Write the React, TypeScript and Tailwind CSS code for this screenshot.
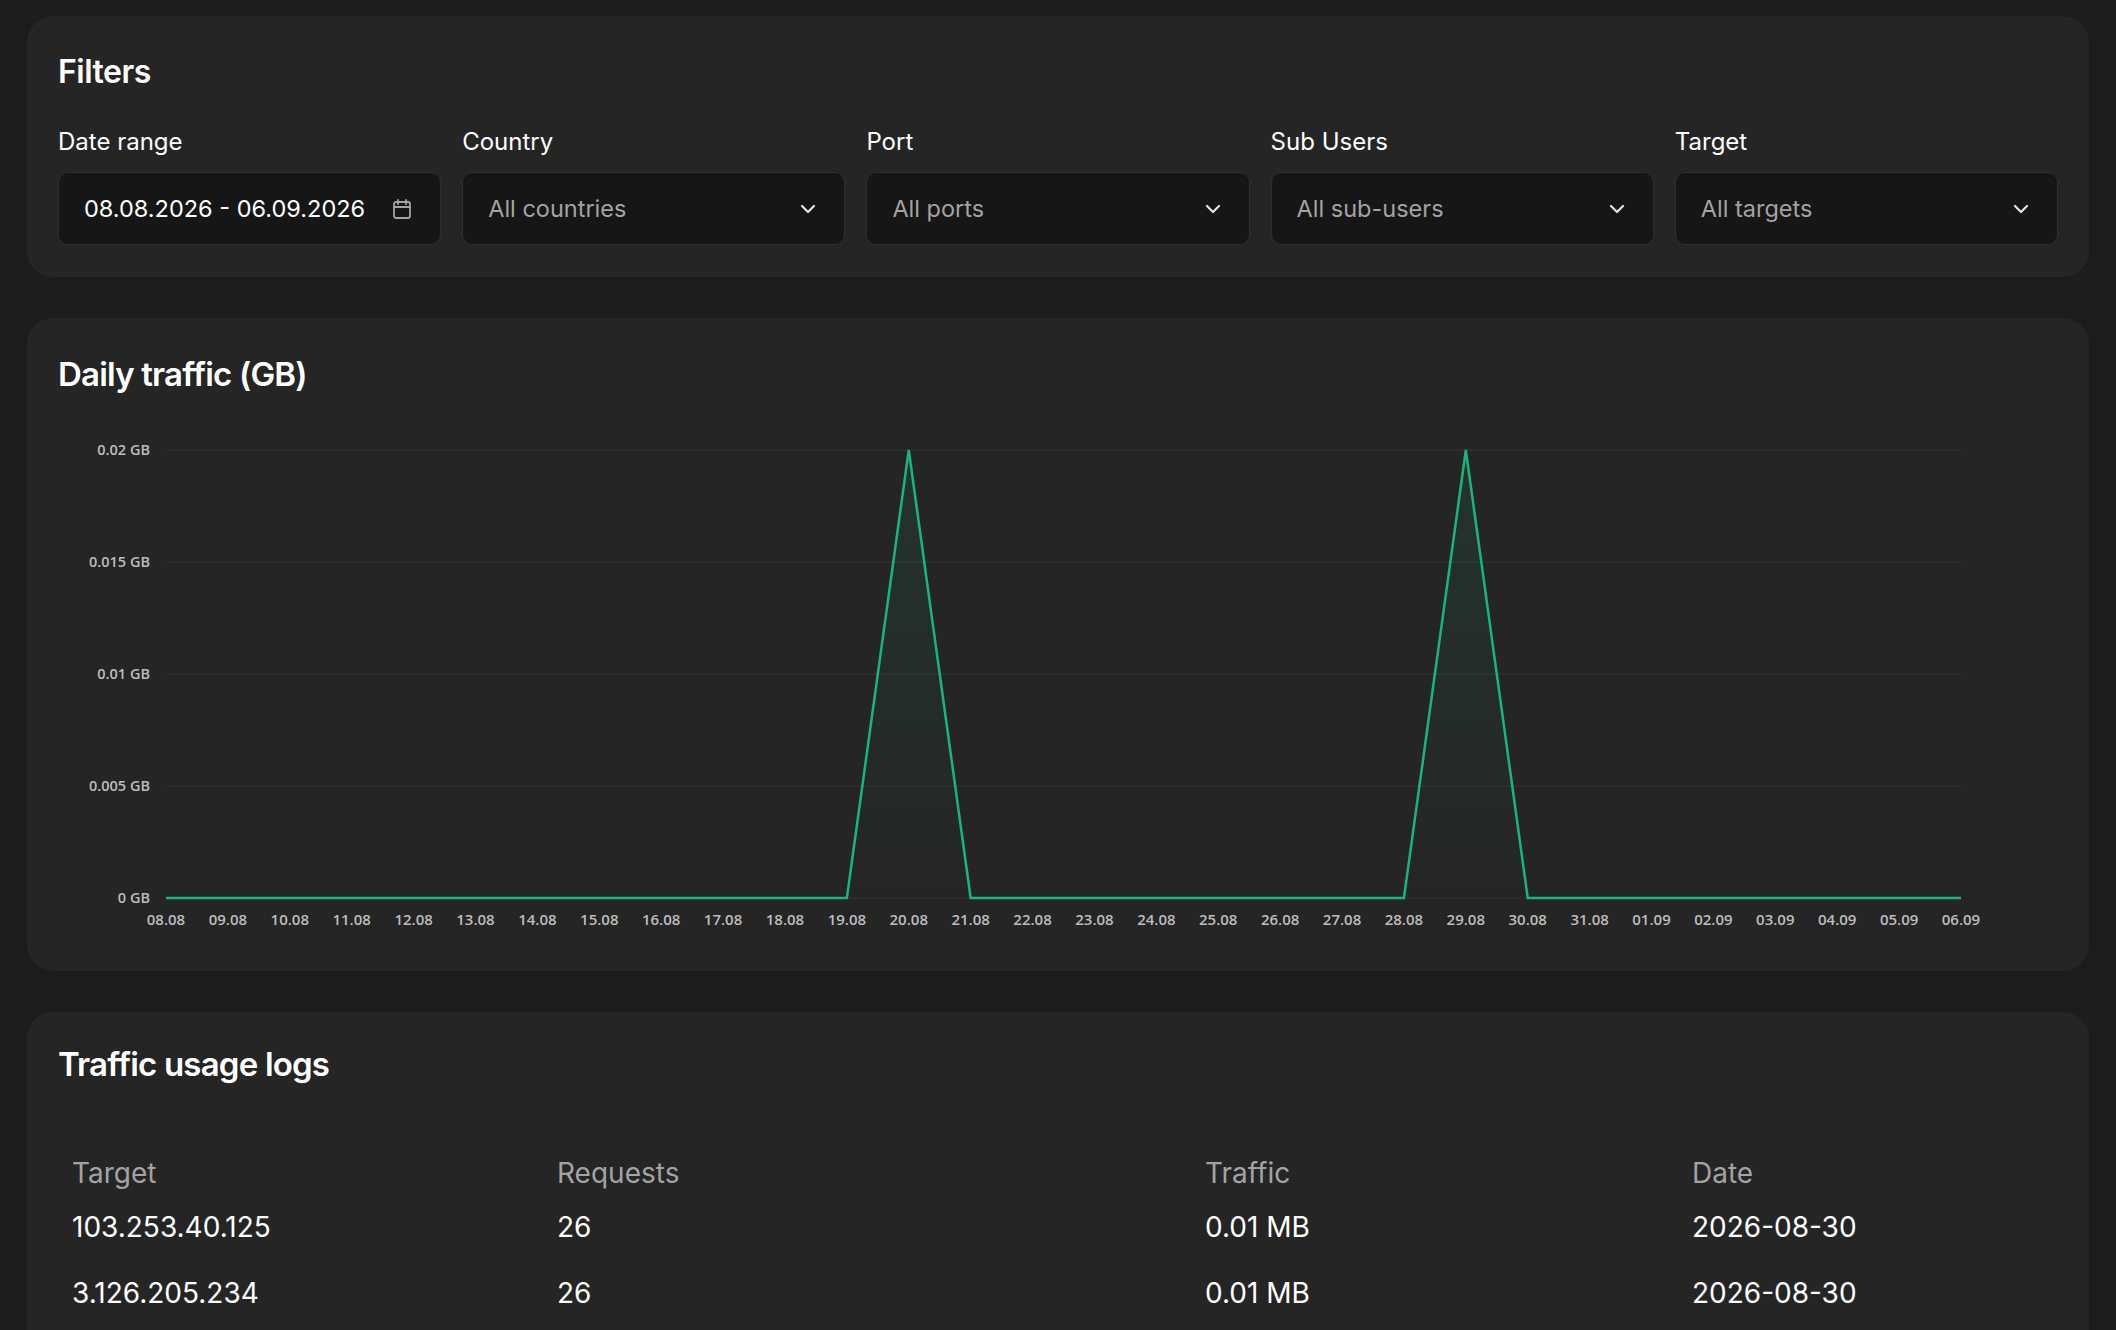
import React from "react";

const days = ["08.08","09.08","10.08","11.08","12.08","13.08","14.08","15.08","16.08","17.08","18.08","19.08","20.08","21.08","22.08","23.08","24.08","25.08","26.08","27.08","28.08","29.08","30.08","31.08","01.09","02.09","03.09","04.09","05.09","06.09"];
const vals = days.map((_, i) => (i === 12 || i === 21 ? 0.02 : 0));

function Chevron() {
  return (
    <svg width="24" height="24" viewBox="0 0 24 24" fill="none" stroke="#e5e5e5" strokeWidth="2.2" strokeLinecap="round" strokeLinejoin="round"><path d="M6 9l6 6 6-6" /></svg>
  );
}

function Select({ label, value }: { label: string; value: string }) {
  return (
    <div className="flex flex-col gap-[14px]">
      <div className="text-[24px] leading-[32px] text-white">{label}</div>
      <div className="h-[73px] rounded-[10px] bg-[#161616] border border-[#2f2f2f] flex items-center justify-between pl-[25px] pr-[24px]">
        <span className="text-[23.5px] text-[#a3a3a3]">{value}</span>
        <Chevron />
      </div>
    </div>
  );
}

function Chart() {
  const x0 = 108, x1 = 1903, y0 = 18, yz = 466;
  const sx = (i: number) => x0 + ((x1 - x0) * i) / 29;
  const sy = (v: number) => yz - ((yz - y0) * v) / 0.02;
  const pts = vals.map((v, i) => `${sx(i)},${sy(v)}`).join(" ");
  const ticks = [0.02, 0.015, 0.01, 0.005, 0];
  return (
    <svg width="2003" height="505" viewBox="0 0 2003 505" style={{ fontFamily: "'Open Sans', sans-serif" }}>
      <defs>
        <linearGradient id="g" x1="0" y1="0" x2="0" y2="1">
          <stop offset="0" stopColor="#16b77a" stopOpacity="0.1" />
          <stop offset="1" stopColor="#16b77a" stopOpacity="0" />
        </linearGradient>
      </defs>
      {ticks.map((t) => (
        <g key={t}>
          <line x1={x0} x2={x1} y1={sy(t)} y2={sy(t)} stroke="#2f2f2f" strokeWidth="1.5" />
          <text x={92} y={sy(t) + 5} textAnchor="end" fill="#bdbdbd" fontSize="14.5" fontWeight="600">{t === 0 ? "0" : t} GB</text>
        </g>
      ))}
      <polygon points={`${x0},${yz} ${pts} ${x1},${yz}`} fill="url(#g)" />
      <polyline points={pts} fill="none" stroke="#16b77a" strokeWidth="2.5" strokeLinejoin="miter" />
      {days.map((d, i) => (
        <text key={d} x={sx(i)} y={493} textAnchor="middle" fill="#bdbdbd" fontSize="15" fontWeight="600">{d}</text>
      ))}
    </svg>
  );
}

export default function App() {
  const rows = [
    ["103.253.40.125", "26", "0.01 MB", "2026-08-30"],
    ["3.126.205.234", "26", "0.01 MB", "2026-08-30"],
  ];
  return (
    <div className="min-h-screen bg-[#1c1c1c] px-[27px] pt-[16px] pb-[10px]" style={{ fontFamily: "Inter, 'Liberation Sans', sans-serif" }}>
      <div className="flex flex-col gap-[41px]">
        <div className="rounded-[26px] bg-[#252525] px-[31px] pt-[36px] pb-[32px]">
          <div className="text-[32px] leading-[40px] font-semibold text-white tracking-[-0.5px]">Filters</div>
          <div className="grid grid-cols-5 gap-[21px] mt-[34px]">
            <div className="flex flex-col gap-[14px]">
              <div className="text-[24px] leading-[32px] text-white">Date range</div>
              <div className="h-[73px] rounded-[10px] bg-[#161616] border border-[#2f2f2f] flex items-center justify-between pl-[25px] pr-[26px]">
                <span className="text-[23.5px] text-white">08.08.2026 - 06.09.2026</span>
                <svg width="24" height="24" viewBox="0 0 24 24" fill="none" stroke="#a3a3a3" strokeWidth="1.8" strokeLinecap="round"><rect x="4" y="5" width="16" height="16" rx="2" /><path d="M4 10h16M8 3v4M16 3v4" /></svg>
              </div>
            </div>
            <Select label="Country" value="All countries" />
            <Select label="Port" value="All ports" />
            <Select label="Sub Users" value="All sub-users" />
            <Select label="Target" value="All targets" />
          </div>
        </div>

        <div className="rounded-[26px] bg-[#252525] px-[31px] pt-[34px] pb-[34px]">
          <div className="text-[33px] leading-[44px] font-semibold text-white tracking-[-0.8px]">Daily traffic (GB)</div>
          <div className="mt-[36px]"><Chart /></div>
        </div>

        <div className="rounded-[26px] bg-[#252525] px-[31px] pt-[30px] pb-[30px]">
          <div className="text-[33px] leading-[44px] font-semibold text-white tracking-[-0.8px]">Traffic usage logs</div>
          <div className="mt-[66px] px-[14px]">
            <div className="grid grid-cols-[485px_648px_487px_1fr] text-[28px] text-[#a3a3a3] h-[40px] items-center">
              <div>Target</div><div>Requests</div><div>Traffic</div><div>Date</div>
            </div>
            {rows.map((r, i) => (
              <div key={i} className="grid grid-cols-[485px_648px_487px_1fr] text-[28px] text-white h-[62px] items-center mt-[4px]">
                {r.map((c, j) => <div key={j}>{c}</div>)}
              </div>
            ))}
          </div>
        </div>
      </div>
    </div>
  );
}
